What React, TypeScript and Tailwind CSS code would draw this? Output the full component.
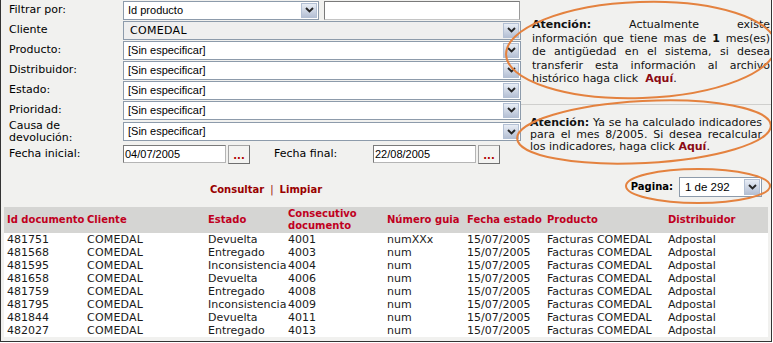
import React from "react";

const verdana = "font-['DejaVu_Sans',Verdana,sans-serif]";
const arial = "font-['Liberation_Sans',Arial,sans-serif]";

const filas = [
  ["481751", "COMEDAL", "Devuelta", "4001", "numXXx"],
  ["481568", "COMEDAL", "Entregado", "4003", "num"],
  ["481595", "COMEDAL", "Inconsistencia", "4004", "num"],
  ["481658", "COMEDAL", "Devuelta", "4006", "num"],
  ["481759", "COMEDAL", "Entregado", "4008", "num"],
  ["481795", "COMEDAL", "Inconsistencia", "4009", "num"],
  ["481844", "COMEDAL", "Devuelta", "4011", "num"],
  ["482027", "COMEDAL", "Entregado", "4013", "num"],
];

function Arrow() {
  return (
    <span className="flex h-full w-[16px] shrink-0 items-center justify-center border border-[#b3c0d4] bg-linear-to-b from-[#e8edf5] to-[#b5c0d4]">
      <svg width="9" height="6" viewBox="0 0 9 6">
        <path d="M1 1l3.5 3.5L8 1" fill="none" stroke="#262626" strokeWidth="1.9" />
      </svg>
    </span>
  );
}

function Select({
  text,
  className,
  gray,
  textClass = arial,
}: {
  text: string;
  className: string;
  gray?: boolean;
  textClass?: string;
}) {
  return (
    <div
      className={`flex h-[19px] items-stretch border border-[#8d9bab] p-px ${
        gray ? "bg-[#efefef]" : "bg-white"
      } ${className}`}
    >
      <span className={`flex-1 truncate pl-[3px] text-[11px] leading-[15px] text-black ${textClass}`}>
        {text}
      </span>
      <Arrow />
    </div>
  );
}

function Row({ label, children, h = "h-[20px]" }: { label: React.ReactNode; children: React.ReactNode; h?: string }) {
  return (
    <div className={`flex items-center ${h}`}>
      <div className="w-[122px] pl-[8px] text-[11px] leading-[12px] text-black">{label}</div>
      {children}
    </div>
  );
}

function DateField({ value }: { value: string }) {
  return (
    <div className="flex items-center gap-[2px]">
      <div
        className={`h-[18px] w-[103px] border border-[#7a7a7a] border-b-[#b5b5b5] border-r-[#b5b5b5] bg-white pl-px text-[11px] leading-[16px] text-black ${arial}`}
      >
        {value}
      </div>
      <div className="flex h-[19px] w-[22px] items-end justify-center border border-[#a4a4a4] border-b-[#6f6f6f] border-r-[#6f6f6f] bg-[#f3f3f1] pb-[3px] text-[10px] font-bold leading-[8px] text-[#b00000]">
        ...
      </div>
    </div>
  );
}

function Line({ children, last }: { children: React.ReactNode; last?: boolean }) {
  return <div className={last ? "text-left" : "text-justify [text-align-last:justify]"}>{children}</div>;
}

export default function App() {
  const head = "text-[#c0001e]";
  return (
    <div className={`relative h-[342px] w-[772px] overflow-hidden border-r border-b border-l border-[#333] bg-[#f1f1ef] ${verdana}`}>
      <div className="flex h-[207px]">
        {/* formulario */}
        <div className="w-[520px] shrink-0">
          <Row label="Filtrar por:">
            <Select text="Id producto" className="w-[196px]" />
            <div className="ml-[5px] h-[19px] w-[196px] border border-[#7a7a7a] border-b-[#c4c4c4] border-r-[#9a9a9a] bg-white" />
          </Row>
          <Row label="Cliente">
            <Select text="COMEDAL" gray textClass={`${verdana} pl-[5px] tracking-[0.3px]`} className="w-[398px]" />
          </Row>
          <Row label="Producto:">
            <Select text="[Sin especificar]" className="w-[398px]" />
          </Row>
          <Row label="Distribuidor:">
            <Select text="[Sin especificar]" className="w-[398px]" />
          </Row>
          <Row label="Estado:">
            <Select text="[Sin especificar]" className="w-[398px]" />
          </Row>
          <Row label="Prioridad:">
            <Select text="[Sin especificar]" className="w-[398px]" />
          </Row>
          <Row
            h="h-[23px]"
            label={
              <>
                Causa de
                <br />
                devolución:
              </>
            }
          >
            <Select text="[Sin especificar]" className="w-[398px]" />
          </Row>
          <Row label="Fecha inicial:" h="h-[22px]">
            <DateField value="04/07/2005" />
            <div className="ml-[24px] w-[99px] text-[11px] text-black">Fecha final:</div>
            <DateField value="22/08/2005" />
          </Row>
          <div className="mt-[19px] flex justify-center pl-[10px] text-[10px] font-bold leading-[12px] text-[#990000]">
            <span>Consultar</span>
            <span className="px-[6px] font-normal">|</span>
            <span>Limpiar</span>
          </div>
        </div>

        {/* avisos */}
        <div className="flex flex-1 flex-col text-[11px] text-[#111]">
          <div className="pt-[18px] pr-px pl-[11px] leading-[13.5px]">
            <Line>
              <b>Atención:</b> Actualmente existe
            </Line>
            <Line>
              información que tiene mas de <b>1</b> mes(es)
            </Line>
            <Line>de antigüedad en el sistema, si desea</Line>
            <Line>transferir esta información al archivo</Line>
            <Line last>
              histórico haga click&nbsp; <b className="text-[#8b0a14]">Aquí</b>.
            </Line>
          </div>
          <div className="mt-[18px] border-t border-[#cfcfcd]" />
          <div className="px-[9px] pt-[12px] leading-[12px]">
            <Line>
              <b>Atención:</b> Ya se ha calculado indicadores
            </Line>
            <Line>para el mes 8/2005. Si desea recalcular</Line>
            <Line last>
              los indicadores, haga click <b className="text-[#8b0a14]">Aquí</b>.
            </Line>
          </div>
          <div className="mt-[24px] flex items-center justify-end gap-[6px] pr-[9px]">
            <span className="text-[10px] font-bold text-black">Pagina:</span>
            <div className="flex h-[20px] w-[83px] items-stretch border border-[#8d9bab] bg-white p-px">
              <span className={`flex-1 pl-[4px] text-[11.5px] leading-[16px] text-black ${arial}`}>1 de 292</span>
              <Arrow />
            </div>
          </div>
        </div>
      </div>

      {/* resultados */}
      <div className="px-[3px]">
        <table className="w-[764px] table-fixed border-collapse">
          <colgroup>
            <col className="w-[83px]" />
            <col className="w-[121px]" />
            <col className="w-[80px]" />
            <col className="w-[99px]" />
            <col className="w-[80px]" />
            <col className="w-[80px]" />
            <col className="w-[121px]" />
            <col className="w-[100px]" />
          </colgroup>
          <thead>
            <tr className={`h-[26px] bg-[#d5d5d3] text-left align-middle text-[10px] leading-[12px] font-bold ${head}`}>
              <th className="pl-[3px] whitespace-nowrap">Id documento</th>
              <th>Cliente</th>
              <th>Estado</th>
              <th>
                Consecutivo
                <br />
                documento
              </th>
              <th>Número guia</th>
              <th className="whitespace-nowrap">Fecha estado</th>
              <th>Producto</th>
              <th>Distribuidor</th>
            </tr>
          </thead>
          <tbody className="bg-white text-[11px] leading-[13px] text-[#1a1a1a]">
            {filas.map((f) => (
              <tr key={f[0]} className="h-[13px]">
                <td className="pl-[3px]">{f[0]}</td>
                <td className="tracking-[0.2px]">{f[1]}</td>
                <td className="whitespace-nowrap">{f[2]}</td>
                <td>{f[3]}</td>
                <td>{f[4]}</td>
                <td>15/07/2005</td>
                <td className="whitespace-nowrap">Facturas COMEDAL</td>
                <td>Adpostal</td>
              </tr>
            ))}
          </tbody>
        </table>
      </div>

      {/* anotaciones a mano */}
      <svg className="pointer-events-none absolute top-0 left-0" width="773" height="343">
        <g fill="none" stroke="#e4823f" strokeWidth="2">
          <ellipse cx="640" cy="50" rx="135" ry="48" transform="rotate(-2 640 50)" />
          <ellipse cx="643" cy="132" rx="127" ry="31" transform="rotate(-3 643 132)" />
          <ellipse cx="697" cy="186" rx="72" ry="17" />
        </g>
      </svg>
    </div>
  );
}
